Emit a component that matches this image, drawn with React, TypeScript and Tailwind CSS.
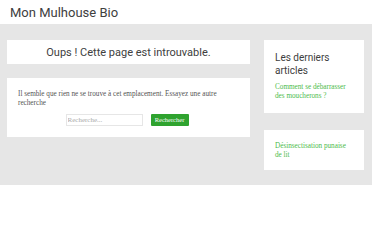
import React from "react";

const serif = { fontFamily: '"Liberation Serif", "DejaVu Serif", serif' };

const App = () => {
  return (
    <div className="w-[372px] h-[240px] bg-white font-['Roboto',sans-serif]">
      <header className="h-[24px] flex items-center px-[10px]">
        <h1 className="text-[13px] leading-none text-[#404040]">Mon Mulhouse Bio</h1>
      </header>

      <div className="bg-[#e6e6e6] h-[161px] pt-[16px] pl-[7px] flex gap-[14px]">
        <main className="w-[243px] flex flex-col gap-[14px]">
          <div className="bg-white h-[24px] flex items-center justify-center">
            <h2 className="text-[11px] leading-none text-[#404040]">Oups ! Cette page est introuvable.</h2>
          </div>
          <div className="bg-white h-[59px] px-[11px] pt-[12px]">
            <p className="text-[7.2px] leading-[9px] text-[#555]" style={serif}>
              Il semble que rien ne se trouve à cet emplacement. Essayez une autre recherche
            </p>
            <form className="flex justify-center gap-[8px] mt-[6px] pr-[3px]" onSubmit={(e) => e.preventDefault()}>
              <input
                type="text"
                placeholder="Recherche..."
                className="w-[77px] h-[12px] border border-[#e6e6e6] px-[1px] text-[7px] text-[#555] placeholder:text-[#aaa] outline-none"
                style={serif}
              />
              <button
                type="submit"
                className="w-[38px] h-[12px] bg-[#2fa32f] text-white text-[6.5px] rounded-[1px]"
                style={serif}
              >
                Rechercher
              </button>
            </form>
          </div>
        </main>

        <aside className="w-[100px] flex flex-col gap-[17px]">
          <div className="bg-white h-[73px] px-[11px] pt-[11px]">
            <h3 className="text-[10px] leading-[13px] text-[#404040]">Les derniers articles</h3>
            <a className="block mt-[6px] text-[7.2px] leading-[9px] text-[#4cbb4c]" style={serif}>
              Comment se débarrasser des moucherons ?
            </a>
          </div>
          <div className="bg-white h-[40px] px-[11px] pt-[12px]">
            <a className="block text-[7.2px] leading-[9px] text-[#4cbb4c]" style={serif}>
              Désinsectisation punaise de lit
            </a>
          </div>
        </aside>
      </div>
    </div>
  );
};

export default App;
